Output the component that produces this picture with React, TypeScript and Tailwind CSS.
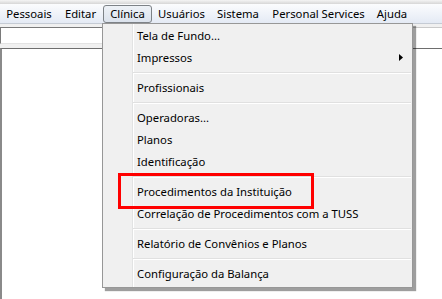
import React from "react";

const bar = [
  { label: "Pessoais", w: "w-[58px]" },
  { label: "Editar", w: "w-[45px]" },
  { label: "Clínica", w: "w-[49px]", active: true },
  { label: "Usuários", w: "w-[59px]" },
  { label: "Sistema", w: "w-[54px]" },
  { label: "Personal Services", w: "w-[107px]" },
  { label: "Ajuda", w: "w-[40px]" },
];

type Entry = { label: string; sub?: boolean } | "sep";

const entries: Entry[] = [
  { label: "Tela de Fundo..." },
  { label: "Impressos", sub: true },
  "sep",
  { label: "Profissionais" },
  "sep",
  { label: "Operadoras..." },
  { label: "Planos" },
  { label: "Identificação" },
  "sep",
  { label: "Procedimentos da Instituição" },
  { label: "Correlação de Procedimentos com a TUSS" },
  "sep",
  { label: "Relatório de Convênios e Planos" },
  "sep",
  { label: "Configuração da Balança" },
];

export default function App() {
  return (
    <div className="relative flex h-[299px] w-[442px] flex-col overflow-hidden bg-[#f0f0f0] font-['Noto_Sans',sans-serif] text-[11.3px] text-black">
      {/* strip of the toolbar above */}
      <div className="h-[4px] bg-[linear-gradient(to_bottom,#f4f4f4,#d6d6d6)]" />

      {/* Menu bar */}
      <div className="flex h-[20px] items-start border-b border-[#c5cbd4] bg-[linear-gradient(to_bottom,#fbfcfe,#e4eaf4)]">
        {bar.map((b) =>
          b.active ? (
            <div
              key={b.label}
              className={`${b.w} mt-[1px] flex h-[18px] items-center justify-center rounded-[3px] border border-[#7d8287] bg-[linear-gradient(to_bottom,#eef2f7,#dbe2ec)] leading-none`}
            >
              {b.label}
            </div>
          ) : (
            <div key={b.label} className={`${b.w} flex h-[20px] items-center justify-center leading-none`}>
              {b.label}
            </div>
          )
        )}
      </div>

      {/* Fields row */}
      <div className="mt-[3px] flex h-[21px] items-start">
        <div className="h-[17px] w-[200px] border border-t-[#7a7a7a] border-l-[#7a7a7a] border-b-[#e3e3e3] border-r-[#e3e3e3] bg-white" />
        <div className="ml-auto h-[21px] w-[100px] border-t border-[#c9c9c9] bg-white" />
      </div>

      {/* Main panel */}
      <div className="flex-1 border-l-2 border-t border-l-[#8a8a8a] border-t-[#6e6e6e] bg-white" />

      {/* Dropdown menu */}
      <div className="absolute left-[102px] top-[23px] w-[311px] border border-[#979797] bg-[linear-gradient(to_right,#f0f0f0_29px,#e2e3e3_29px,#e2e3e3_30px,#ffffff_30px,#ffffff_31px,#f0f0f0_31px)] pb-[2px] pt-[1px] shadow-[3px_3px_1px_rgba(0,0,0,0.38)]">
        {entries.map((e, i) =>
          e === "sep" ? (
            <div key={i} className="flex h-[8px] items-center">
              <div className="ml-[30px] mr-[1px] h-[2px] flex-1 border-t border-b border-t-[#e0e0e0] border-b-white" />
            </div>
          ) : (
            <div key={i} className="relative flex h-[22px] items-center pl-[34px] leading-none">
              {e.label}
              {e.sub && (
                <svg className="absolute right-[9px] top-[7px]" width="4" height="7" viewBox="0 0 4 7">
                  <polygon points="0,0 4,3.5 0,7" fill="#000" />
                </svg>
              )}
            </div>
          )
        )}
      </div>

      {/* Annotation */}
      <div className="absolute left-[118px] top-[173px] h-[36px] w-[196px] border-[3px] border-[#ff0000]" />
    </div>
  );
}
